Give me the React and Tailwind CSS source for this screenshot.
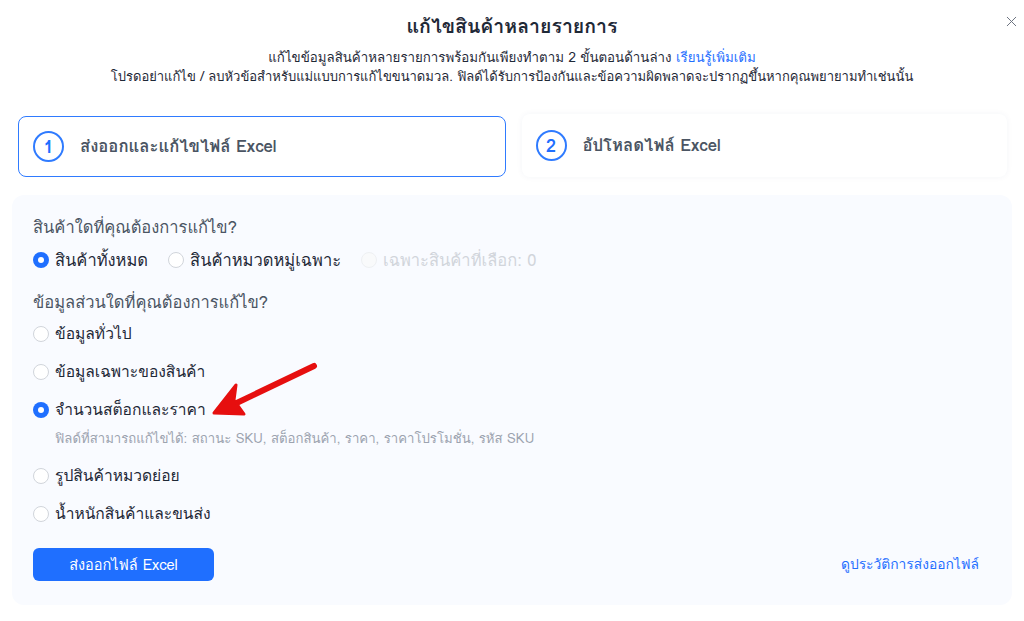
import React, { useState } from 'react';
import { X } from 'lucide-react';

const productScopes = [
  { id: 'all', label: 'สินค้าทั้งหมด' },
  { id: 'category', label: 'สินค้าหมวดหมู่เฉพาะ' },
  { id: 'selected', label: 'เฉพาะสินค้าที่เลือก: 0', disabled: true },
];

const dataTypes = [
  { id: 'general', label: 'ข้อมูลทั่วไป' },
  { id: 'spec', label: 'ข้อมูลเฉพาะของสินค้า' },
  { id: 'stock', label: 'จำนวนสต็อกและราคา', hint: 'ฟิลด์ที่สามารถแก้ไขได้: สถานะ SKU, สต็อกสินค้า, ราคา, ราคาโปรโมชั่น, รหัส SKU' },
  { id: 'images', label: 'รูปสินค้าหมวดย่อย' },
  { id: 'weight', label: 'น้ำหนักสินค้าและขนส่ง' },
];

const Radio = ({ checked, disabled }) => (
  <span
    className={
      checked
        ? 'w-4 h-4 rounded-full bg-[#1f6fff] flex items-center justify-center shrink-0'
        : disabled
        ? 'w-4 h-4 rounded-full border border-[#eef0f3] bg-[#f9fafb] shrink-0'
        : 'w-4 h-4 rounded-full border border-[#d1d5db] bg-white shrink-0'
    }
  >
    {checked && <span className="w-1.5 h-1.5 rounded-full bg-white" />}
  </span>
);

export default function App() {
  const [scope, setScope] = useState('all');
  const [type, setType] = useState('stock');

  return (
    <div className="w-[1024px] h-[621px] bg-white relative overflow-hidden font-['Loma','Noto_Sans_Thai_Looped',sans-serif]">
      <button className="absolute right-[4px] top-[13px] text-[#6b7280]">
        <X size={17} strokeWidth={1.4} />
      </button>

      <div className="pt-[14px] text-center">
        <h1 className="text-[19.5px] font-bold text-[#1f2937] leading-[26px]">แก้ไขสินค้าหลายรายการ</h1>
        <p className="mt-[8px] text-[13.3px] text-[#1f2937] leading-[19px]">
          แก้ไขข้อมูลสินค้าหลายรายการพร้อมกันเพียงทำตาม 2 ขั้นตอนด้านล่าง{' '}
          <span className="text-[#1f6fff]">เรียนรู้เพิ่มเติม</span>
        </p>
        <p className="text-[13px] text-[#1f2937] leading-[19px]">
          โปรดอย่าแก้ไข / ลบหัวข้อสำหรับแม่แบบการแก้ไขขนาดมวล. ฟิลด์ได้รับการป้องกันและข้อความผิดพลาดจะปรากฏขึ้นหากคุณพยายามทำเช่นนั้น
        </p>
      </div>

      <div className="flex gap-4 pl-[18px] pr-[17px] mt-[30px]">
        <div className="flex-1 h-[61px] rounded-[8px] border border-[#2f7bff] flex items-center px-[14px] gap-[16px] bg-white">
          <span className="w-[31px] h-[31px] rounded-full border-2 border-[#2f7bff] text-[#1f6fff] text-[18px] font-bold flex items-center justify-center">1</span>
          <span className="text-[16.7px] font-bold text-[#4b5563]">ส่งออกและแก้ไขไฟล์ Excel</span>
        </div>
        <div className="flex-1 h-[63px] -mt-[2px] rounded-[8px] flex items-center px-[14px] gap-[16px] bg-white shadow-[0_0_6px_rgba(30,60,120,0.05)]">
          <span className="w-[31px] h-[31px] rounded-full border-2 border-[#2f7bff] text-[#1f6fff] text-[18px] font-bold flex items-center justify-center">2</span>
          <span className="text-[16.7px] font-bold text-[#4b5563]">อัปโหลดไฟล์ Excel</span>
        </div>
      </div>

      <div className="mx-[12px] mt-[18px] h-[410px] rounded-[12px] bg-[#f9fbff] px-[21px] pt-[21px]">
        <p className="text-[16.5px] text-[#4b5563] leading-[22px]">สินค้าใดที่คุณต้องการแก้ไข?</p>
        <div className="flex items-center gap-[20px] mt-[11px] h-[22px]">
          {productScopes.map((o) => (
            <label
              key={o.id}
              className="flex items-center gap-[6px] cursor-pointer"
              onClick={() => !o.disabled && setScope(o.id)}
            >
              <Radio checked={scope === o.id} disabled={o.disabled} />
              <span className={o.disabled ? 'text-[16.5px] text-[#d1d5db]' : 'text-[16.5px] text-[#1f2937]'}>{o.label}</span>
            </label>
          ))}
        </div>

        <p className="text-[16.5px] text-[#4b5563] leading-[22px] mt-[20px]">ข้อมูลส่วนใดที่คุณต้องการแก้ไข?</p>
        <div className="flex flex-col mt-[10px] gap-[16px]">
          {dataTypes.map((o) => (
            <div key={o.id}>
              <label className="flex items-center gap-[6px] cursor-pointer h-[22px]" onClick={() => setType(o.id)}>
                <Radio checked={type === o.id} />
                <span className="text-[15.6px] text-[#1f2937]">{o.label}</span>
              </label>
              {o.hint && (
                <p className="text-[13.2px] text-[#9ca3af] pl-[22px] mt-[8px] leading-[20px]">{o.hint}</p>
              )}
            </div>
          ))}
        </div>

        <div className="flex items-center justify-between mt-[23px] pr-[12px]">
          <button className="w-[181px] h-[33px] rounded-[6px] bg-[#1f6fff] text-white text-[14.5px]">
            ส่งออกไฟล์ Excel
          </button>
          <span className="text-[13.8px] text-[#1f6fff]">ดูประวัติการส่งออกไฟล์</span>
        </div>
      </div>

      <svg className="absolute left-[206px] top-[358px]" width="120" height="62" viewBox="0 0 120 62">
        <path d="M108 8 L16 52" stroke="#e60f0f" strokeWidth="6" strokeLinecap="round" fill="none" />
        <path d="M8 55 L30 27 L28 42 L38 56 Z" fill="#e60f0f" stroke="#e60f0f" strokeWidth="3" strokeLinejoin="round" />
      </svg>
    </div>
  );
}
